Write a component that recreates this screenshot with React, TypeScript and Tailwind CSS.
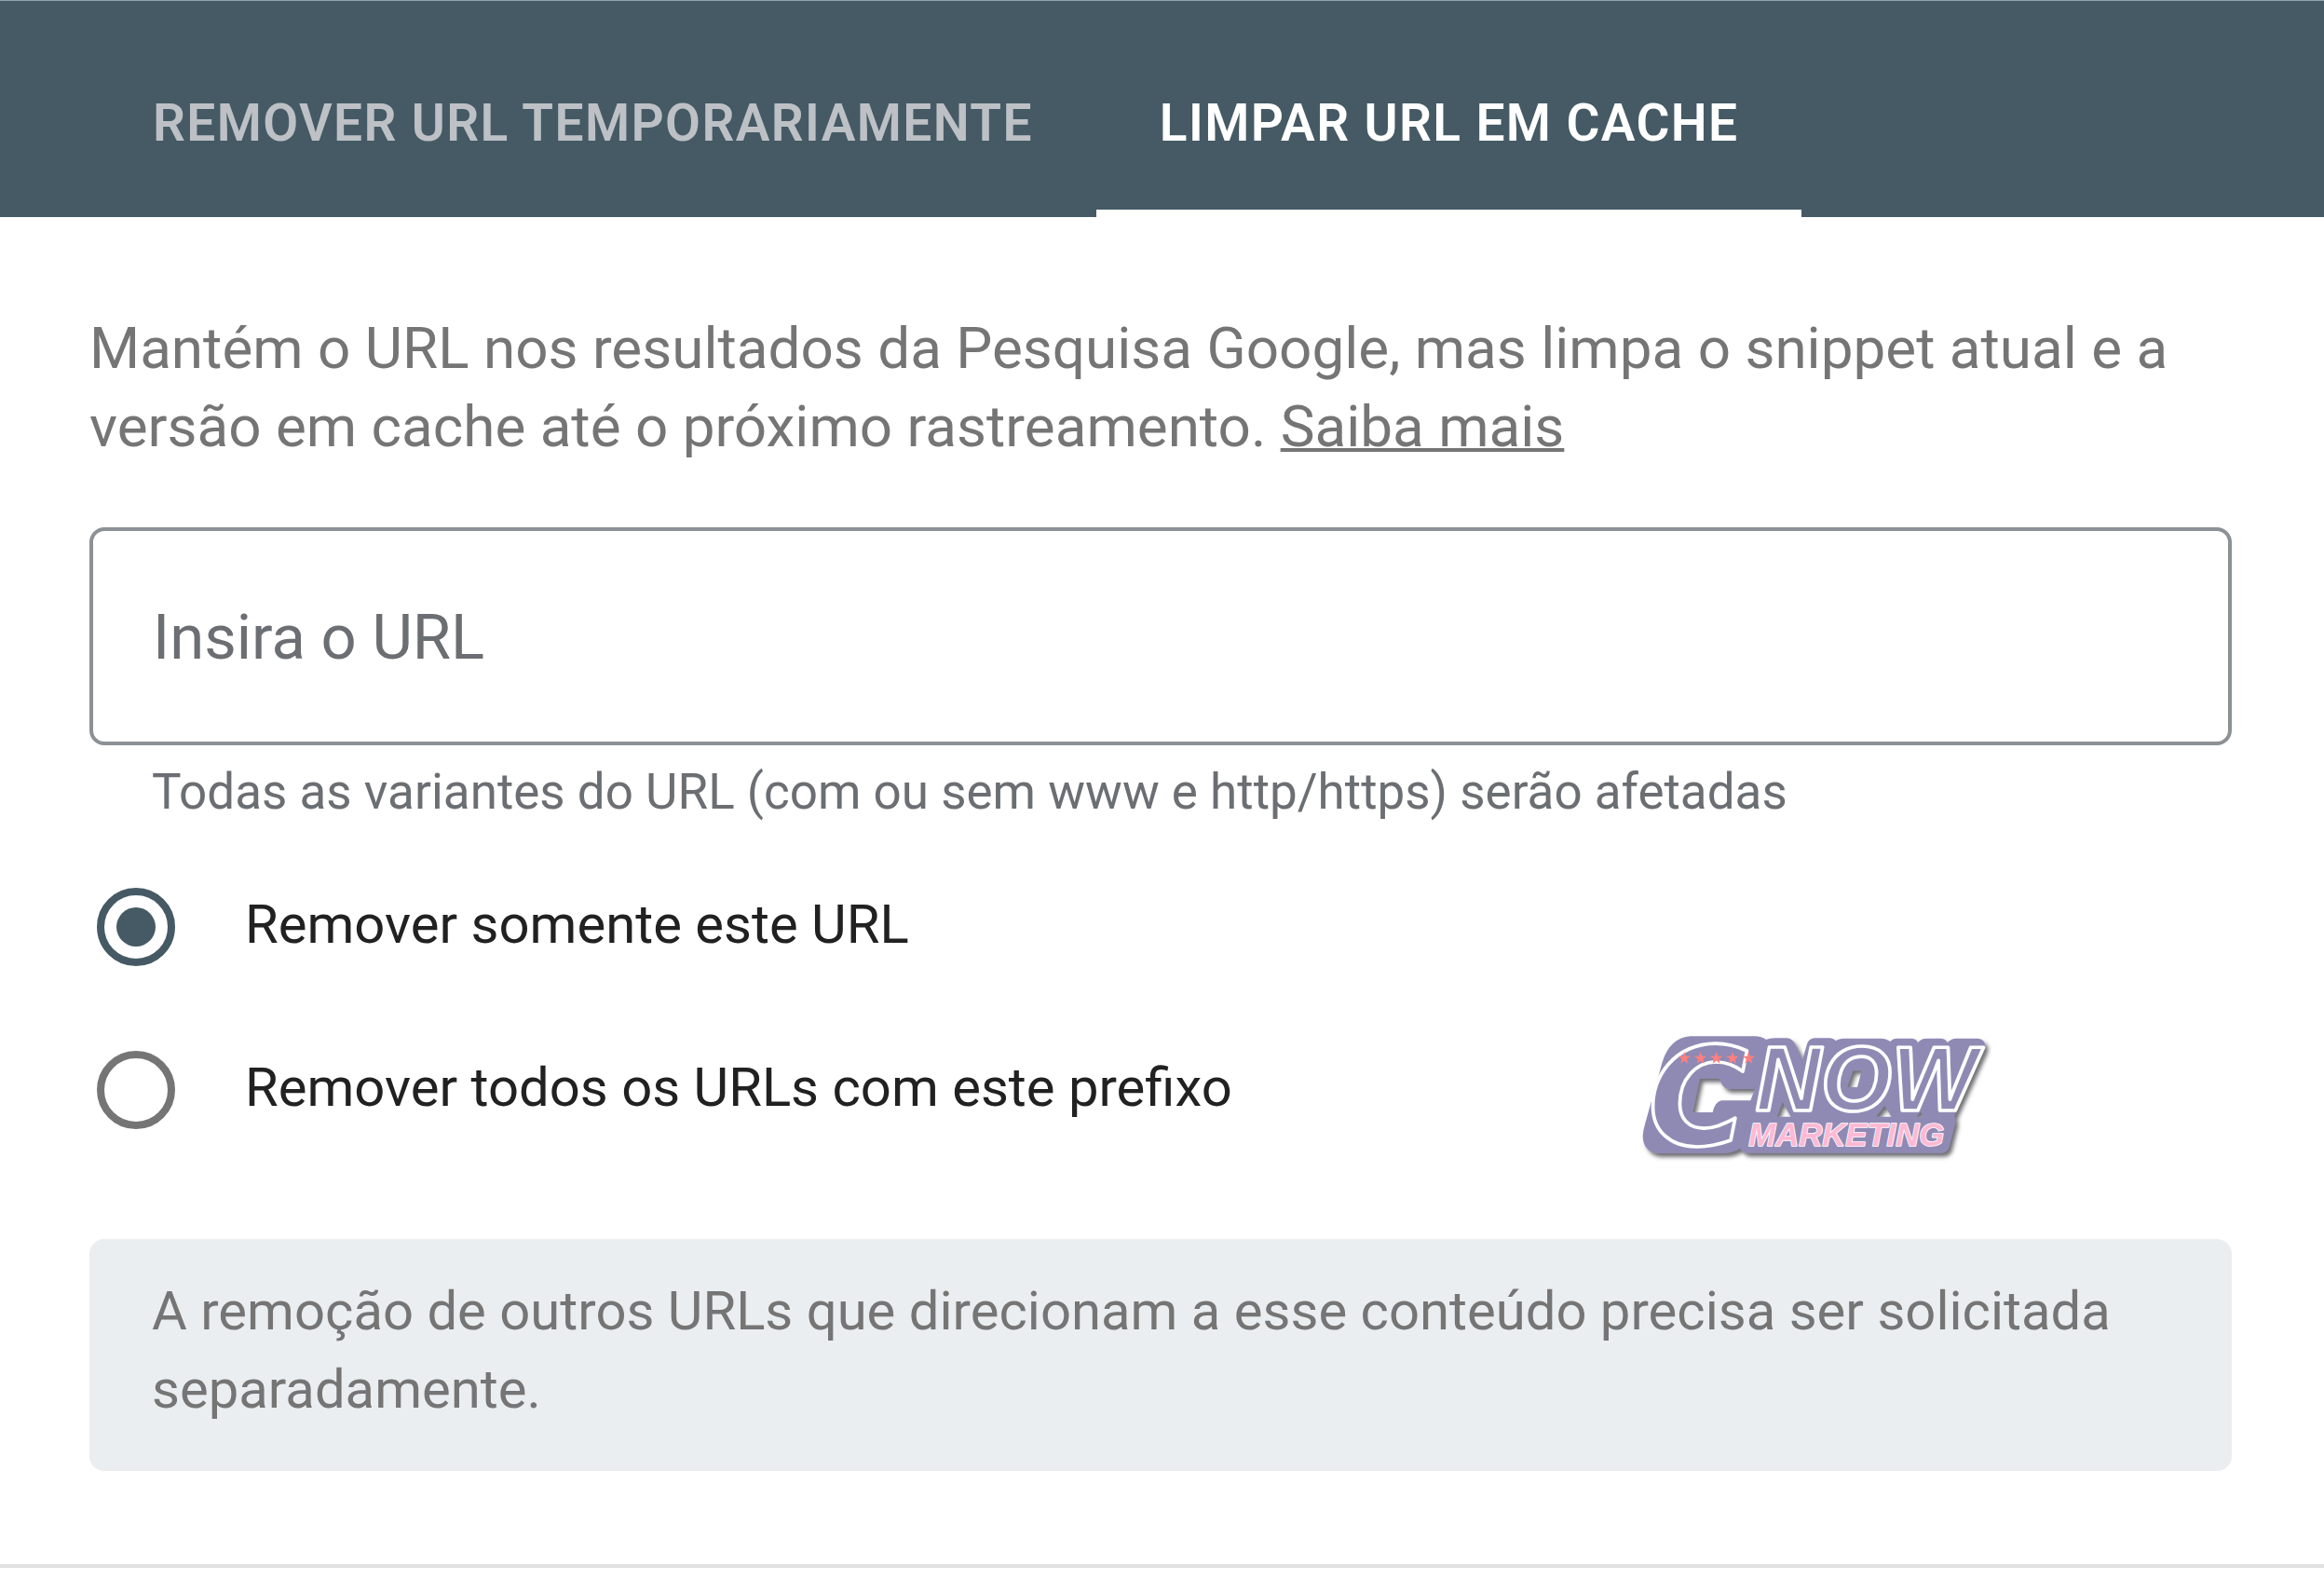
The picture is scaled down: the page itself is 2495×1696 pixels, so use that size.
import { useState } from "react";

const TABS = ["Remover URL temporariamente", "Limpar URL em cache"];

const OPTIONS = [
  { value: "single", label: "Remover somente este URL" },
  { value: "prefix", label: "Remover todos os URLs com este prefixo" },
];

const STAR =
  "M0 -20 L5 -6 L20 -6 L8 3 L12 18 L0 9 L-12 18 L-8 3 L-20 -6 L-5 -6 Z";

const CnowLogo = () => (
  <svg
    viewBox="0 0 1260 510"
    role="img"
    aria-label="CNOW Marketing"
    className="w-[420px] shrink-0 overflow-visible"
  >
    <defs>
      <filter id="plate-shadow" x="-5%" y="-5%" width="112%" height="118%">
        <feDropShadow
          dx="10"
          dy="12"
          stdDeviation="7"
          floodColor="#3f3f46"
          floodOpacity="0.75"
        />
      </filter>
    </defs>

    {/* Plate behind the lettering */}
    <path
      filter="url(#plate-shadow)"
      fill="#8f8ab4"
      fillRule="evenodd"
      d="M225 67 H430 Q455 68 468 78 Q480 73 495 73 H535 Q553 75 560 90 L586 140 L600 92 Q606 75 622 73 H672 Q685 73 692 82 Q702 74 720 74 H835 Q855 74 868 84 Q876 74 890 74 H938 Q952 75 957 88 Q966 74 984 74 H1032 Q1047 75 1052 88 Q1063 74 1080 74 H1150 Q1180 78 1172 108 L1074 325 Q1080 335 1076 352 L1058 422 Q1052 443 1030 443 H415 Q395 445 384 428 Q360 444 325 444 H118 Q72 438 71 388 Q72 370 78 350 L134 150 Q158 72 225 67 Z
      M255 203 H318 Q328 236 348 237 H432 L418 274 H325 Q303 278 296 312 H232 Z
      M521 278 L548 326 H503 Z
      M850 290 L872 326 H822 Z
      M966 310 L974 326 H952 Z
      M748 178 H776 L762 231 H730 Z"
    />

    <g fontWeight="700" fontStyle="italic" strokeLinejoin="round">
      <text
        x="88"
        y="416"
        fontFamily="'DejaVu Sans', sans-serif"
        fontSize="440"
        fill="#8f8ab4"
        stroke="#fff"
        strokeWidth="11"
      >
        C
      </text>
      <text
        x="434"
        y="306"
        fontFamily="'Liberation Sans', sans-serif"
        fontSize="292"
        fill="#8f8ab4"
        stroke="#fff"
        strokeWidth="11"
      >
        NOW
      </text>
      <text
        x="412"
        y="421"
        fontFamily="'Liberation Sans', sans-serif"
        fontSize="104"
        fill="#ffb9d4"
        stroke="#fff"
        strokeWidth="5"
        paintOrder="stroke"
      >
        MARKETING
      </text>
    </g>

    {[205, 257, 308, 360, 412].map((x) => (
      <path key={x} d={STAR} transform={`translate(${x} 137)`} fill="#ff7f7f" />
    ))}
  </svg>
);

export default function App() {
  const [tab, setTab] = useState(1);
  const [scope, setScope] = useState("single");
  const [url, setUrl] = useState("");

  return (
    <div className="min-h-screen bg-white font-[Roboto,sans-serif] text-[58px] leading-[84px] text-[#757575]">
      <header className="border-t border-[#90a4ae] bg-[#455a64]">
        <div role="tablist" className="flex px-24">
          {TABS.map((label, i) => (
            <button
              key={label}
              role="tab"
              aria-selected={tab === i}
              onClick={() => setTab(i)}
              className={`cursor-pointer border-b-8 px-[68px] pt-[89px] pb-[51px] text-[55px] font-semibold tracking-wide uppercase ${
                tab === i
                  ? "border-white text-white"
                  : "border-transparent text-[#bdc1c6]"
              }`}
            >
              {label}
            </button>
          ))}
        </div>
      </header>

      <main className="pt-[99px] pr-[99px] pb-[100px] pl-24">
        <p className="text-[62px]">
          Mantém o URL nos resultados da Pesquisa Google, mas limpa o snippet
          atual e a versão em cache até o próximo rastreamento.{" "}
          <a href="#saiba-mais" className="underline decoration-4">
            Saiba mais
          </a>
        </p>

        <input
          type="text"
          aria-label="Insira o URL"
          aria-describedby="url-hint"
          placeholder="Insira o URL"
          value={url}
          onChange={(e) => setUrl(e.target.value)}
          className="mt-[66px] block h-[234px] w-full rounded-2xl border-4 border-[#8b9195] px-16 pt-0.5 text-[67px] text-[#202124] placeholder:text-[#6b6e72]"
        />
        <p id="url-hint" className="mt-2 px-[67px] text-[53px] text-[#6b6e72]">
          Todas as variantes do URL (com ou sem www e http/https) serão afetadas
        </p>

        <div className="mt-[61px] flex items-end justify-between">
          <div
            role="radiogroup"
            aria-label="Escopo"
            className="flex flex-col gap-[91px] pb-12 pl-2"
          >
            {OPTIONS.map(({ value, label }) => (
              <label
                key={value}
                className="flex h-[84px] cursor-pointer items-center gap-[75px] text-[#212121]"
              >
                <input
                  type="radio"
                  name="scope"
                  value={value}
                  checked={scope === value}
                  onChange={() => setScope(value)}
                  className="grid size-[84px] shrink-0 appearance-none place-content-center rounded-full border-8 border-[#757575] before:size-[42px] before:rounded-full checked:border-[#455a64] checked:before:bg-[#455a64]"
                />
                <span className="pb-1.5">{label}</span>
              </label>
            ))}
          </div>
          <div className="mr-[236px]">
            <CnowLogo />
          </div>
        </div>

        <p className="mt-[70px] rounded-2xl bg-[#eaeef1] px-[67px] pt-[35px] pb-[46px]">
          A remoção de outros URLs que direcionam a esse conteúdo precisa ser
          solicitada separadamente.
        </p>
      </main>

      <hr className="border-t-4 border-[#e0e0e0]" />
    </div>
  );
}
